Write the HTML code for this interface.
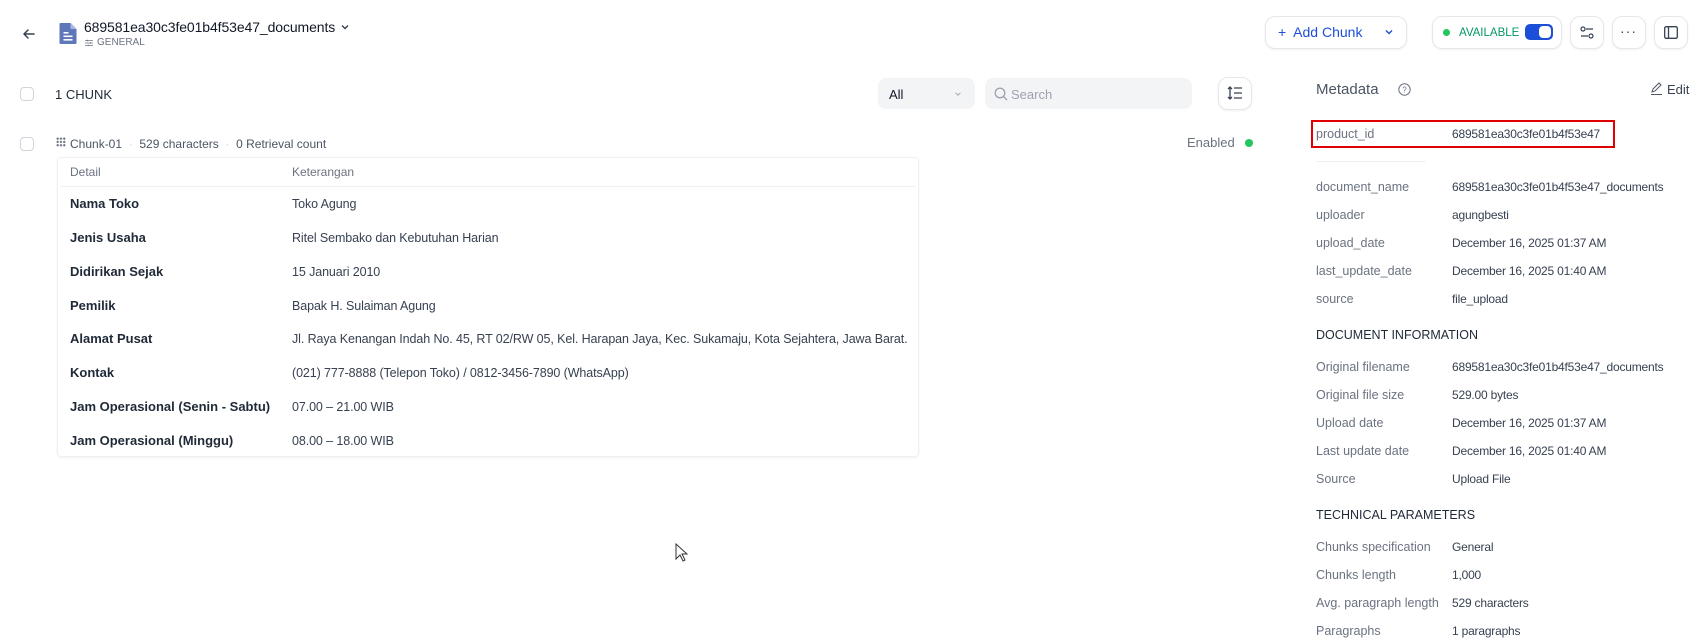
<!DOCTYPE html>
<html><head><meta charset="utf-8"><style>
*{margin:0;padding:0;box-sizing:border-box}
body{width:1698px;height:643px;background:#fff;font-family:"Liberation Sans",sans-serif;position:relative;overflow:hidden;color:#1f2937}
.a{position:absolute;white-space:nowrap;line-height:16px}
.btn{position:absolute;border:1px solid #e5e7eb;border-radius:10px;background:#fff;box-shadow:0 1px 2px rgba(0,0,0,.06)}
.cb{position:absolute;width:14px;height:14px;border:1px solid #d1d5db;border-radius:4px;background:#fff}
.ml{position:absolute;left:1316px;font-size:12.5px;color:#6b7280;line-height:16px;white-space:nowrap}
.mv{position:absolute;left:1452px;font-size:12px;letter-spacing:-0.2px;color:#374151;line-height:16px;white-space:nowrap}
.mh{position:absolute;left:1316px;font-size:12.5px;color:#1f2937;line-height:16px;white-space:nowrap}
.tl{position:absolute;left:70px;font-size:13px;font-weight:bold;color:#1f2937;line-height:16px;white-space:nowrap}
.tv{position:absolute;left:292px;font-size:12.5px;letter-spacing:-0.1px;color:#374151;line-height:16px;white-space:nowrap}
</style></head><body>
<svg class="a" style="left:21px;top:26px" width="16" height="16" viewBox="0 0 16 16"><path d="M13 8H3M7 4L3 8l4 4" stroke="#374151" stroke-width="1.5" fill="none" stroke-linecap="round" stroke-linejoin="round"/></svg>
<svg class="a" style="left:59px;top:23px" width="18" height="21" viewBox="0 0 17 21"><path d="M1 0h10l6 6v14a1 1 0 0 1-1 1H1a1 1 0 0 1-1-1V1a1 1 0 0 1 1-1z" fill="#5d77b8"/><path d="M11 0v6h6z" fill="#a9b8de"/><rect x="4" y="9" width="5" height="1.6" fill="#fff"/><rect x="4" y="12.5" width="9" height="1.6" fill="#fff"/><rect x="4" y="16" width="9" height="1.6" fill="#fff"/></svg>
<div class="a" style="left:84px;top:18px;font-size:14px;letter-spacing:-0.1px;font-weight:500;color:#111827;line-height:18px">689581ea30c3fe01b4f53e47_documents</div>
<svg class="a" style="left:340px;top:22px" width="10" height="10" viewBox="0 0 10 10"><path d="M2 3.5l3 3 3-3" stroke="#374151" stroke-width="1.4" fill="none"/></svg>
<svg class="a" style="left:85px;top:39px" width="8" height="8" viewBox="0 0 10 8"><path d="M0 1h10M0 4h10M0 7h10" stroke="#6b7280" stroke-width="1"/><path d="M3 0v2M7 3v2M4 6v2" stroke="#6b7280"/></svg>
<div class="a" style="left:97px;top:37px;font-size:10px;color:#6b7280;line-height:12px">GENERAL</div>

<div class="btn" style="left:1265px;top:16px;width:142px;height:33px"></div>
<div class="a" style="left:1278px;top:24px;font-size:14px;color:#1d4ed8">+&nbsp; Add Chunk</div>
<svg class="a" style="left:1384px;top:27px" width="10" height="10" viewBox="0 0 10 10"><path d="M2 3.5l3 3 3-3" stroke="#1d4ed8" stroke-width="1.4" fill="none"/></svg>
<div class="btn" style="left:1432px;top:16px;width:130px;height:33px"></div>
<div class="a" style="left:1443px;top:29px;width:7px;height:7px;border-radius:50%;background:#22c55e"></div>
<div class="a" style="left:1459px;top:25px;font-size:11.5px;color:#059669;font-weight:500">AVAILABLE</div>
<div class="a" style="left:1525px;top:24px;width:28px;height:16px;border-radius:5px;background:#1d4ed8"></div>
<div class="a" style="left:1539px;top:26px;width:12px;height:12px;border-radius:4px;background:#fff"></div>
<div class="btn" style="left:1570px;top:16px;width:34px;height:33px"></div>
<svg class="a" style="left:1580px;top:26px" width="14" height="13" viewBox="0 0 14 13"><circle cx="3" cy="3" r="2" stroke="#374151" fill="none" stroke-width="1.2"/><path d="M6 3h7M1 10h7" stroke="#374151" stroke-width="1.2"/><circle cx="11" cy="10" r="2" stroke="#374151" fill="none" stroke-width="1.2"/></svg>
<div class="btn" style="left:1612px;top:16px;width:34px;height:33px"></div>
<div class="a" style="left:1620px;top:23px;font-size:14px;color:#374151;letter-spacing:1px">···</div>
<div class="btn" style="left:1654px;top:16px;width:34px;height:33px"></div>
<svg class="a" style="left:1664px;top:26px" width="14" height="13" viewBox="0 0 14 13"><rect x="0.7" y="0.7" width="12.6" height="11.6" rx="1.5" stroke="#374151" fill="none" stroke-width="1.3"/><path d="M4.5 1v11" stroke="#374151" stroke-width="1.3"/></svg>

<div class="cb" style="left:20px;top:87px"></div>
<div class="a" style="left:55px;top:87px;font-size:13px;color:#1f2937">1 CHUNK</div>
<div class="a" style="left:878px;top:78px;width:97px;height:31px;background:#f3f4f6;border-radius:8px"></div>
<div class="a" style="left:889px;top:87px;font-size:13px;color:#111827">All</div>
<svg class="a" style="left:954px;top:90px" width="8" height="8" viewBox="0 0 10 10"><path d="M2 3.5l3 3 3-3" stroke="#9ca3af" stroke-width="1.2" fill="none"/></svg>
<div class="a" style="left:985px;top:78px;width:207px;height:31px;background:#f3f4f6;border-radius:8px"></div>
<svg class="a" style="left:994px;top:87px" width="14" height="14" viewBox="0 0 14 14"><circle cx="6" cy="6" r="4.8" stroke="#9ca3af" fill="none" stroke-width="1.3"/><path d="M9.5 9.5L13 13" stroke="#9ca3af" stroke-width="1.3"/></svg>
<div class="a" style="left:1011px;top:87px;font-size:13px;color:#9ca3af">Search</div>
<div class="btn" style="left:1218px;top:77px;width:34px;height:33px"></div>
<svg class="a" style="left:1227px;top:86px" width="16" height="14" viewBox="0 0 16 14"><path d="M3 1v12M1 3l2-2 2 2M1 11l2 2 2-2" stroke="#374151" stroke-width="1.3" fill="none"/><path d="M7 2h8M7 7h8M7 12h8" stroke="#374151" stroke-width="1.3"/></svg>

<div class="cb" style="left:20px;top:137px"></div>
<div class="a" style="left:56px;top:137px;width:10px;height:10px;background:radial-gradient(circle,#6b7280 1px,transparent 1.2px) 0 0/3.3px 3.3px"></div>
<div class="a" style="left:70px;top:136px;font-size:12px;color:#4b5563">Chunk-01 <span style="color:#d1d5db">&nbsp;·&nbsp;</span> 529 characters <span style="color:#d1d5db">&nbsp;·&nbsp;</span> 0 Retrieval count</div>
<div class="a" style="left:1187px;top:135px;font-size:13px;color:#6b7280">Enabled</div>
<div class="a" style="left:1245px;top:139px;width:8px;height:8px;border-radius:50%;background:#22c55e"></div>

<div class="a" style="left:57px;top:157px;width:862px;height:300px;border:1px solid #eef0f3;border-radius:4px;box-shadow:0 1px 3px rgba(0,0,0,.05)"></div>
<div class="a" style="left:60px;top:186px;width:856px;height:1px;background:#eef0f3"></div>
<div class="a" style="left:70px;top:164px;font-size:12px;color:#6b7280">Detail</div>
<div class="a" style="left:292px;top:164px;font-size:12px;color:#6b7280">Keterangan</div>
<div class="tl" style="top:196px">Nama Toko</div><div class="tv" style="top:196px">Toko Agung</div>
<div class="tl" style="top:230px">Jenis Usaha</div><div class="tv" style="top:230px">Ritel Sembako dan Kebutuhan Harian</div>
<div class="tl" style="top:264px">Didirikan Sejak</div><div class="tv" style="top:264px">15 Januari 2010</div>
<div class="tl" style="top:298px">Pemilik</div><div class="tv" style="top:298px">Bapak H. Sulaiman Agung</div>
<div class="tl" style="top:331px">Alamat Pusat</div><div class="tv" style="top:331px">Jl. Raya Kenangan Indah No. 45, RT 02/RW 05, Kel. Harapan Jaya, Kec. Sukamaju, Kota Sejahtera, Jawa Barat.</div>
<div class="tl" style="top:365px">Kontak</div><div class="tv" style="top:365px">(021) 777-8888 (Telepon Toko) / 0812-3456-7890 (WhatsApp)</div>
<div class="tl" style="top:399px">Jam Operasional (Senin - Sabtu)</div><div class="tv" style="top:399px">07.00 – 21.00 WIB</div>
<div class="tl" style="top:433px">Jam Operasional (Minggu)</div><div class="tv" style="top:433px">08.00 – 18.00 WIB</div>

<svg class="a" style="left:675px;top:543px" width="13" height="19" viewBox="0 0 13 19"><path d="M1 1v15l4-4 3 6 2-1-3-6h5z" fill="#fff" stroke="#333" stroke-width="1"/></svg>

<div class="a" style="left:1316px;top:81px;font-size:15px;color:#4b5563;line-height:18px">Metadata</div>
<svg class="a" style="left:1398px;top:83px" width="13" height="13" viewBox="0 0 13 13"><circle cx="6.5" cy="6.5" r="5.7" stroke="#6b7280" fill="none" stroke-width="1"/><text x="6.5" y="9.5" font-size="8" text-anchor="middle" fill="#6b7280" font-family="Liberation Sans">?</text></svg>
<svg class="a" style="left:1650px;top:82px" width="13" height="13" viewBox="0 0 13 13"><path d="M2 10l1-3 6-6 2 2-6 6zM1 12.5h11" stroke="#4b5563" fill="none" stroke-width="1"/></svg>
<div class="a" style="left:1667px;top:82px;font-size:13px;color:#374151">Edit</div>
<div class="a" style="left:1311px;top:120px;width:304px;height:28px;border:2px solid #e00000"></div>
<div class="ml" style="top:126px">product_id</div><div class="mv" style="top:126px">689581ea30c3fe01b4f53e47</div>
<div class="a" style="left:1316px;top:161px;width:110px;height:1px;background:#eef0f3"></div>
<div class="ml" style="top:179px">document_name</div><div class="mv" style="top:179px">689581ea30c3fe01b4f53e47_documents</div>
<div class="ml" style="top:207px">uploader</div><div class="mv" style="top:207px">agungbesti</div>
<div class="ml" style="top:235px">upload_date</div><div class="mv" style="top:235px">December 16, 2025 01:37 AM</div>
<div class="ml" style="top:263px">last_update_date</div><div class="mv" style="top:263px">December 16, 2025 01:40 AM</div>
<div class="ml" style="top:291px">source</div><div class="mv" style="top:291px">file_upload</div>
<div class="mh" style="top:327px">DOCUMENT INFORMATION</div>
<div class="ml" style="top:359px">Original filename</div><div class="mv" style="top:359px">689581ea30c3fe01b4f53e47_documents</div>
<div class="ml" style="top:387px">Original file size</div><div class="mv" style="top:387px">529.00 bytes</div>
<div class="ml" style="top:415px">Upload date</div><div class="mv" style="top:415px">December 16, 2025 01:37 AM</div>
<div class="ml" style="top:443px">Last update date</div><div class="mv" style="top:443px">December 16, 2025 01:40 AM</div>
<div class="ml" style="top:471px">Source</div><div class="mv" style="top:471px">Upload File</div>
<div class="mh" style="top:507px">TECHNICAL PARAMETERS</div>
<div class="ml" style="top:539px">Chunks specification</div><div class="mv" style="top:539px">General</div>
<div class="ml" style="top:567px">Chunks length</div><div class="mv" style="top:567px">1,000</div>
<div class="ml" style="top:595px">Avg. paragraph length</div><div class="mv" style="top:595px">529 characters</div>
<div class="ml" style="top:623px">Paragraphs</div><div class="mv" style="top:623px">1 paragraphs</div>
</body></html>
